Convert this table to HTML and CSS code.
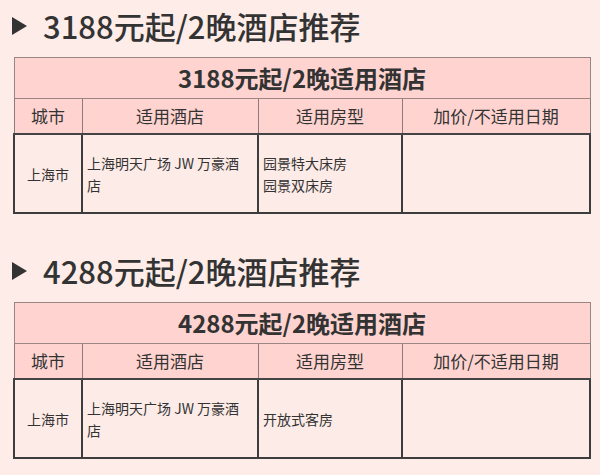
FILE: index.html
```html
<!DOCTYPE html>
<html lang="zh-CN">
<head>
<meta charset="utf-8">
<link rel="stylesheet" href="styles.css">
</head>
<body>
<div class="page">
  <section class="sec">
    <h2 class="heading"><svg class="tri" width="15" height="18" viewBox="0 0 15 18"><polygon points="0,0 15,9 0,18" fill="#333"/></svg><span>3188元起/2晚酒店推荐</span></h2>
    <table class="tbl">
      <colgroup><col class="c1"><col class="c2"><col class="c3"><col class="c4"></colgroup>
      <tr class="title"><th colspan="4">3188元起/2晚适用酒店</th></tr>
      <tr class="head"><th>城市</th><th>适用酒店</th><th>适用房型</th><th>加价/不适用日期</th></tr>
      <tr class="body"><td class="center">上海市</td><td>上海明天广场 JW 万豪酒<br>店</td><td>园景特大床房<br>园景双床房</td><td></td></tr>
    </table>
  </section>
  <section class="sec">
    <h2 class="heading"><svg class="tri" width="15" height="18" viewBox="0 0 15 18"><polygon points="0,0 15,9 0,18" fill="#333"/></svg><span>4288元起/2晚酒店推荐</span></h2>
    <table class="tbl">
      <colgroup><col class="c1"><col class="c2"><col class="c3"><col class="c4"></colgroup>
      <tr class="title"><th colspan="4">4288元起/2晚适用酒店</th></tr>
      <tr class="head"><th>城市</th><th>适用酒店</th><th>适用房型</th><th>加价/不适用日期</th></tr>
      <tr class="body"><td class="center">上海市</td><td>上海明天广场 JW 万豪酒<br>店</td><td>开放式客房</td><td></td></tr>
    </table>
  </section>
</div>
</body>
</html>
```
FILE: styles.css
```css
html, body {
  margin: 0;
  padding: 0;
  background: #fdece8;
}
body {
  font-family: "Noto Sans CJK SC", "Noto Sans", sans-serif;
  color: #333;
  width: 600px;
  height: 475px;
  overflow: hidden;
}
.page {
  padding: 6px 11px 0 13px;
  display: flex;
  flex-direction: column;
  gap: 37px;
}
.sec {
  display: flex;
  flex-direction: column;
  gap: 11px;
}
.heading {
  margin: 0;
  height: 40px;
  display: flex;
  align-items: center;
  gap: 16px;
  font-size: 31px;
  font-weight: 500;
  line-height: 40px;
  color: #333;
}
.tri {
  margin-left: -1px;
  flex: none;
}
.tbl {
  width: 576px;
  border-collapse: collapse;
  table-layout: fixed;
}
.c1 { width: 68px; }
.c2 { width: 176px; }
.c3 { width: 144px; }
.c4 { width: 188px; }
.title th {
  height: 40px;
  padding: 0;
  background: #ffd4d0;
  border: 1.5px solid #9a8583;
  font-size: 24px;
  font-weight: 700;
  text-align: center;
  line-height: 40px;
}
.head th {
  height: 34px;
  padding: 0;
  background: #ffd4d0;
  border: 1.5px solid #8d7b79;
  border-bottom: 2px solid #444;
  font-size: 17px;
  font-weight: 400;
  text-align: center;
  line-height: 34px;
}
.body td {
  height: 77px;
  padding: 0 4px;
  background: #fdebe7;
  border: 2px solid #3d3d3d;
  font-size: 14px;
  line-height: 22px;
  text-align: left;
  vertical-align: middle;
}
.body td.center {
  text-align: center;
  padding: 0;
}
```
